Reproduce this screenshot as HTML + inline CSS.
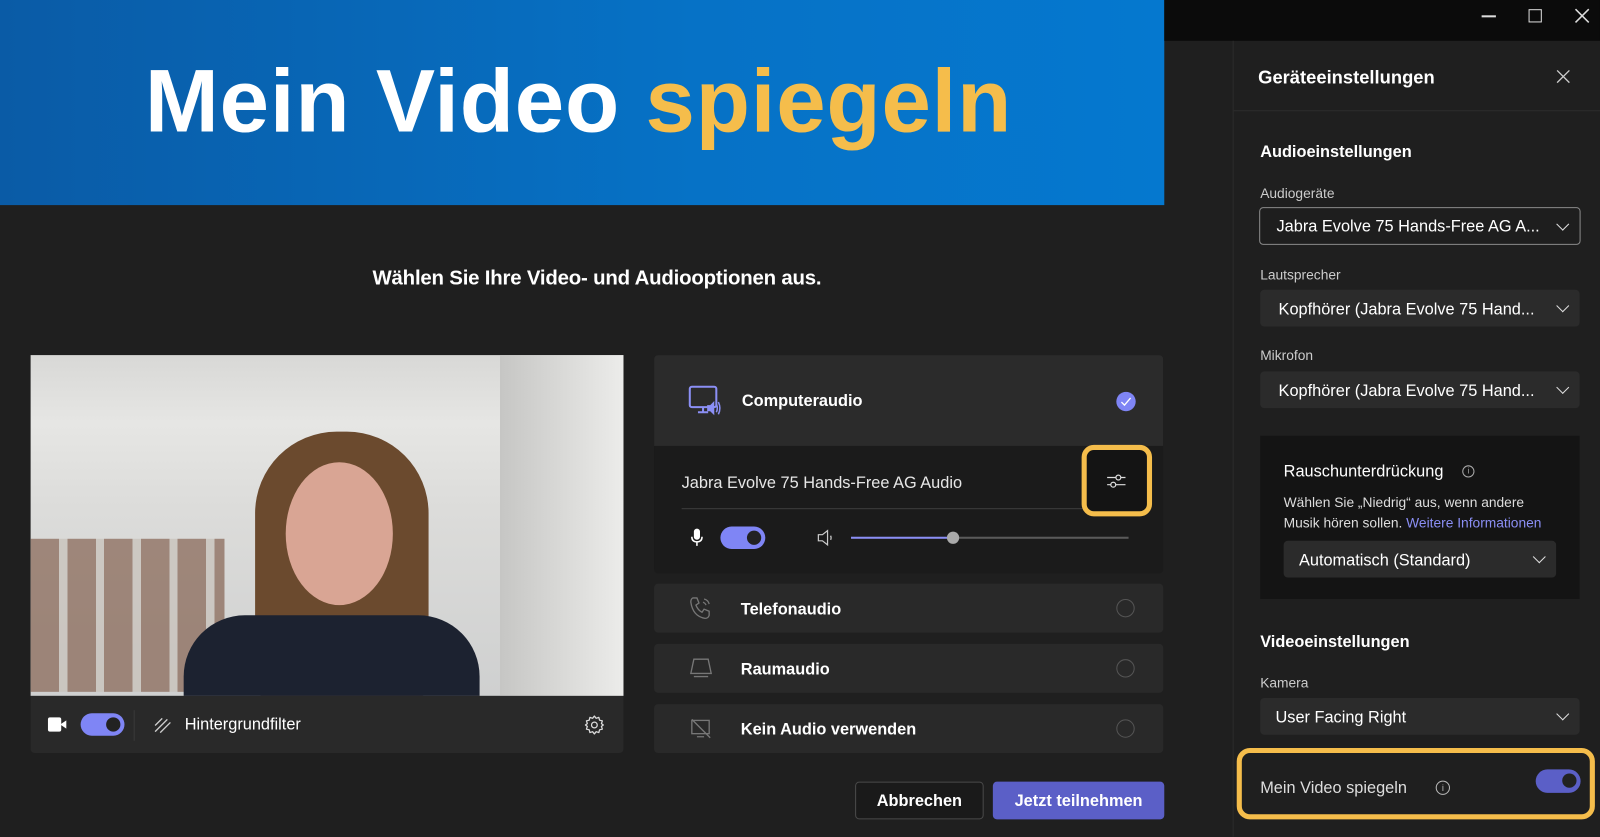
<!DOCTYPE html>
<html><head><meta charset="utf-8"><style>
*{box-sizing:border-box;margin:0;padding:0}
html,body{width:1600px;height:837px;overflow:hidden;background:#1f1f1f}
#w{position:absolute;left:0;top:0;width:1568px;height:820px;transform:scale(1.0204);transform-origin:0 0;font-family:"Segoe UI","Liberation Sans",sans-serif;color:#fff}
.a{position:absolute}
.t{font-size:15px;color:#e6e6e6}
.b{font-weight:bold}
.dd{position:absolute;background:#2b2b2b;border-radius:4px;font-size:16px;padding-left:18px;display:flex;align-items:center;color:#fff}
.chev{position:absolute;right:12px;top:50%;width:9px;height:9px;border-right:1.5px solid #ddd;border-bottom:1.5px solid #ddd;transform:translateY(-75%) rotate(45deg)}
.card{position:absolute;left:641px;width:499px;background:#292929;border-radius:4px;display:flex;align-items:center}
.card span{position:relative;top:2px}
.radio{position:absolute;right:28px;top:50%;margin-top:-9px;width:18px;height:18px;border:1.5px solid #555;border-radius:50%}
.tog{position:absolute;background:#7f85f5;border-radius:12px}
.tog::after{content:"";position:absolute;right:4px;top:4px;width:14px;height:14px;border-radius:50%;background:#222}
</style></head><body><div id="w">
<div class="a" style="left:0;top:0;width:1141px;height:201px;background:linear-gradient(90deg,#0a5ba6,#0672c6 60%,#0578cf)"></div>
<div class="a b" style="left:142px;top:50px;font-size:87px;letter-spacing:0.8px;font-family:'Liberation Sans',sans-serif;white-space:nowrap">Mein Video <span style="color:#f5bd4b">spiegeln</span></div>
<div class="a" style="left:1141px;top:0;width:427px;height:40px;background:#0b0b0b"></div>
<div class="a" style="left:1452px;top:15px;width:14px;height:1.5px;background:#ddd"></div>
<div class="a" style="left:1498px;top:9px;width:13px;height:13px;border:1.5px solid #ddd"></div>
<svg class="a" style="left:1543px;top:8px" width="15" height="15"><path d="M1 1L14 14M14 1L1 14" stroke="#ddd" stroke-width="1.5"/></svg>
<div class="a b" style="left:0;width:1170px;top:262px;text-align:center;font-size:20px;letter-spacing:-0.2px">Wählen Sie Ihre Video- und Audiooptionen aus.</div>
<div class="a" style="left:30px;top:348px;width:581px;height:334px;overflow:hidden;background:linear-gradient(180deg,#d8d8d6 0%,#e6e6e4 20%,#dcdcda 45%,#cfd0d0 100%)">
 <div class="a" style="left:0;top:180px;width:190px;height:150px;background:repeating-linear-gradient(90deg,#8a6a5a 0 28px,#c8c2bb 28px 36px);opacity:.75"></div>
 <div class="a" style="left:460px;top:0;width:121px;height:334px;background:linear-gradient(90deg,#c6c6c4,#ececea)"></div>
 <div class="a" style="left:220px;top:75px;width:170px;height:260px;border-radius:80px 80px 10px 10px;background:#6b4a2e"></div>
 <div class="a" style="left:250px;top:105px;width:105px;height:140px;border-radius:50%;background:#d9a594"></div>
 <div class="a" style="left:150px;top:255px;width:290px;height:100px;border-radius:60px 60px 0 0;background:#1c2230"></div>
</div>
<div class="a" style="left:30px;top:682px;width:581px;height:56px;background:#292929;border-radius:0 0 4px 4px"></div>
<div class="a" style="left:47px;top:703px;width:13px;height:14px;background:#fff;border-radius:2px"></div>
<div class="a" style="left:59px;top:706px;width:0;height:0;border-top:4px solid transparent;border-bottom:4px solid transparent;border-right:6px solid #fff"></div>
<div class="tog" style="left:79px;top:699px;width:43px;height:22px"></div>
<div class="a" style="left:131px;top:696px;width:1px;height:30px;background:#3a3a3a"></div>
<svg class="a" style="left:150px;top:701px" width="20" height="18"><path d="M2 10L9 3M2 16L14 4M7 17L17 7" stroke="#ccc" stroke-width="1.3"/></svg>
<div class="a t" style="left:181px;top:702px;font-size:16px;color:#fff">Hintergrundfilter</div>
<svg class="a" style="left:572px;top:700px" width="21" height="21" viewBox="0 0 24 24"><circle cx="12" cy="12" r="3.2" fill="none" stroke="#ddd" stroke-width="1.4"/><path d="M12 2l2 2.5 3-1 .8 3.1 3.1.8-1 3L22 12l-2.1 1.6 1 3-3.1.8-.8 3.1-3-1L12 22l-2-2.5-3 1-.8-3.1-3.1-.8 1-3L2 12l2.1-1.6-1-3 3.1-.8.8-3.1 3 1z" fill="none" stroke="#ddd" stroke-width="1.4" stroke-linejoin="round"/></svg>
<div class="a" style="left:641px;top:348px;width:499px;height:214px;background:#1b1b1b;border-radius:4px;overflow:hidden">
 <div class="a" style="left:0;top:0;width:499px;height:89px;background:#2b2b2b"></div>
</div>
<svg class="a" style="left:674px;top:377px" width="34" height="32" viewBox="0 0 34 32"><rect x="2" y="2" width="26" height="20" rx="2" fill="none" stroke="#8b8ff5" stroke-width="2"/><path d="M10 27h10M15 22v5" stroke="#8b8ff5" stroke-width="2"/><path d="M19 20h3l4-4v14l-4-4h-3z" fill="#8b8ff5"/><path d="M28 19q2 4 0 8M30 17q3 6 0 12" stroke="#8b8ff5" stroke-width="1.5" fill="none"/></svg>
<div class="a b" style="left:727px;top:385px;font-size:16px">Computeraudio</div>
<div class="a" style="left:1094px;top:384px;width:19px;height:19px;border-radius:50%;background:#7f85f5"></div>
<svg class="a" style="left:1098px;top:388px" width="11" height="11"><path d="M1 6l3 3 6-7" stroke="#fff" stroke-width="1.3" fill="none"/></svg>
<div class="a t" style="left:668px;top:465px;font-size:16px">Jabra Evolve 75 Hands-Free AG Audio</div>
<div class="a" style="left:668px;top:498px;width:400px;height:1px;background:#3d3d3d"></div>
<div class="a" style="left:1060px;top:436px;width:69px;height:70px;border:5px solid #f5bd4b;border-radius:12px;background:#141414"></div>
<svg class="a" style="left:1084px;top:463px" width="20" height="17"><path d="M1 5h18M1 12h18" stroke="#ddd" stroke-width="1.2"/><circle cx="12" cy="5" r="2.4" fill="#141414" stroke="#ddd" stroke-width="1.2"/><circle cx="7" cy="12" r="2.4" fill="#141414" stroke="#ddd" stroke-width="1.2"/></svg>
<svg class="a" style="left:676px;top:517px" width="14" height="20"><rect x="4" y="1" width="6" height="11" rx="3" fill="#fff"/><path d="M2 9q0 5 5 5t5-5M7 14v4" stroke="#fff" stroke-width="1.5" fill="none"/></svg>
<div class="tog" style="left:706px;top:516px;width:44px;height:22px"></div>
<svg class="a" style="left:800px;top:518px" width="18" height="18"><path d="M2 6h4l5-4v14l-5-4H2z" fill="none" stroke="#ccc" stroke-width="1.2"/><path d="M14 7q1 2 0 4" stroke="#ccc" stroke-width="1.2" fill="none"/></svg>
<div class="a" style="left:834px;top:526px;width:100px;height:2px;background:#8b8ff5"></div>
<div class="a" style="left:934px;top:526px;width:172px;height:2px;background:#5a5a5a"></div>
<div class="a" style="left:928px;top:521px;width:12px;height:12px;border-radius:50%;background:#aaa"></div>
<div class="card" style="top:572px;height:48px"><svg style="margin-left:33px" width="26" height="26" viewBox="0 0 26 26"><path d="M5 3l4 0 2 5-3 2q2 5 6 7l2-3 5 2v4q-1 3-4 3Q5 21 3 7q0-3 2-4z" fill="none" stroke="#777" stroke-width="1.3"/><path d="M16 4q4 1 5 5M15 7q2 1 3 3" stroke="#777" stroke-width="1.2" fill="none"/></svg><span class="b" style="margin-left:26px;font-size:16px">Telefonaudio</span><div class="radio"></div></div>
<div class="card" style="top:631px;height:48px"><svg style="margin-left:34px" width="24" height="22"><path d="M5 2h14l3 14H2z" fill="none" stroke="#777" stroke-width="1.3"/><path d="M5 19h14" stroke="#777" stroke-width="1.3"/></svg><span class="b" style="margin-left:27px;font-size:16px">Raumaudio</span><div class="radio"></div></div>
<div class="card" style="top:690px;height:48px"><svg style="margin-left:35px" width="22" height="22"><rect x="2" y="3" width="17" height="13" fill="none" stroke="#777" stroke-width="1.3"/><path d="M2 2l18 18M7 19h7" stroke="#777" stroke-width="1.3"/></svg><span class="b" style="margin-left:28px;font-size:16px">Kein Audio verwenden</span><div class="radio"></div></div>
<div class="a b" style="left:838px;top:766px;width:126px;height:37px;border:1px solid #4a4a4a;border-radius:4px;background:#1a1a1a;text-align:center;line-height:37px;font-size:16px">Abbrechen</div>
<div class="a b" style="left:973px;top:766px;width:168px;height:37px;border-radius:4px;background:#5b5fc7;text-align:center;line-height:39px;font-size:16px">Jetzt teilnehmen</div>
<div class="a" style="left:1208px;top:40px;width:1px;height:780px;background:#2c2c2c"></div>
<div class="a" style="left:1209px;top:108px;width:359px;height:1px;background:#2c2c2c"></div>
<div class="a b" style="left:1233px;top:66px;font-size:18px">Geräteeinstellungen</div>
<svg class="a" style="left:1525px;top:68px" width="14" height="14"><path d="M1 1l12 12M13 1L1 13" stroke="#ccc" stroke-width="1.3"/></svg>
<div class="a b" style="left:1235px;top:141px;font-size:16px">Audioeinstellungen</div>
<div class="a t" style="left:1235px;top:182px;font-size:13.5px;color:#ccc">Audiogeräte</div>
<div class="dd" style="left:1234px;top:203px;width:315px;height:37px;background:#1e1e1e;border:1px solid #8a8a8a;padding-left:16px;padding-top:3px">Jabra Evolve 75 Hands-Free AG A...<span class="chev"></span></div>
<div class="a t" style="left:1235px;top:262px;font-size:13.5px;color:#ccc">Lautsprecher</div>
<div class="dd" style="left:1235px;top:284px;width:313px;height:36px;padding-top:3px">Kopfhörer (Jabra Evolve 75 Hand...<span class="chev"></span></div>
<div class="a t" style="left:1235px;top:341px;font-size:13.5px;color:#ccc">Mikrofon</div>
<div class="dd" style="left:1235px;top:364px;width:313px;height:36px;padding-top:3px">Kopfhörer (Jabra Evolve 75 Hand...<span class="chev"></span></div>
<div class="a" style="left:1235px;top:427px;width:313px;height:160px;background:#141414"></div>
<div class="a" style="left:1258px;top:454px;font-size:16px">Rauschunterdrückung</div>
<div class="a" style="left:1433px;top:456px;width:12px;height:12px;border:1px solid #aaa;border-radius:50%;font-size:8px;text-align:center;line-height:10px;color:#aaa">i</div>
<div class="a" style="left:1258px;top:483px;font-size:13.5px;line-height:20px;color:#ddd">Wählen Sie „Niedrig“ aus, wenn andere<br>Musik hören sollen. <span style="color:#8b8ff5">Weitere Informationen</span></div>
<div class="dd" style="left:1258px;top:530px;width:267px;height:36px;padding-left:15px;padding-top:3px">Automatisch (Standard)<span class="chev"></span></div>
<div class="a b" style="left:1235px;top:621px;font-size:16px">Videoeinstellungen</div>
<div class="a t" style="left:1235px;top:662px;font-size:13.5px;color:#ccc">Kamera</div>
<div class="dd" style="left:1235px;top:684px;width:313px;height:36px;padding-left:15px;padding-top:3px">User Facing Right<span class="chev"></span></div>
<div class="a" style="left:1212px;top:733px;width:351px;height:70px;border:5px solid #f5bd4b;border-radius:13px;background:#1f1f1f"></div>
<div class="a" style="left:1235px;top:764px;font-size:16px;color:#ddd">Mein Video spiegeln</div>
<div class="a" style="left:1407px;top:765px;width:14px;height:14px;border:1px solid #bbb;border-radius:50%;font-size:9px;text-align:center;line-height:12px;color:#bbb">i</div>
<div class="tog" style="left:1505px;top:754px;width:44px;height:23px;background:#5b5fc7"></div>
</div></body></html>
